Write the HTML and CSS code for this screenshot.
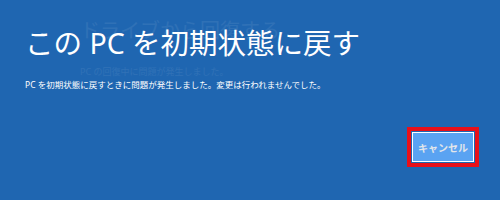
FILE: index.html
```html
<!DOCTYPE html>
<html lang="ja">
<head>
  <meta charset="UTF-8">
  <title>この PC を初期状態に戻す</title>
  <link rel="stylesheet" href="styles.css">
</head>
<body>
  <div class="screen">
    <div class="ghost">
      <div class="ghost-title">ドライブから回復する</div>
      <div class="ghost-text">PC の回復中に問題が発生しました。</div>
    </div>
    <h1 class="title">この PC を初期状態に戻す</h1>
    <p class="message">PC を初期状態に戻すときに問題が発生しました。変更は行われませんでした。</p>
    <div class="actions">
      <div class="highlight">
        <button class="btn">キャンセル</button>
      </div>
    </div>
  </div>
</body>
</html>
```

FILE: styles.css
```css
html, body {
  margin: 0;
  padding: 0;
  width: 500px;
  height: 200px;
  overflow: hidden;
  background-color: #1f66b1;
}

.screen {
  position: relative;
  height: 200px;
  padding: 0 0 0 25px;
  box-sizing: border-box;
  font-family: "Noto Sans", "Noto Sans CJK JP", sans-serif;
  color: #ffffff;
}

/* faint leftover of the previous screen fading out */
.ghost {
  position: absolute;
  top: 0;
  left: 80px;
  color: #ffffff;
  opacity: 0.07;
}

.ghost-title {
  margin-top: 18px;
  font-size: 20px;
  line-height: 26px;
}

.ghost-text {
  margin-top: 22px;
  font-size: 9px;
  line-height: 12px;
}

.title {
  margin: 0;
  padding-top: 25px;
  font-size: 28.5px;
  font-weight: normal;
  line-height: 36px;
}

.message {
  margin: 18px 0 0;
  font-size: 8.5px;
  line-height: 12px;
}

.actions {
  display: flex;
  justify-content: flex-end;
  padding-right: 21px;
  margin-top: 36px;
}

.highlight {
  border: 4px solid #e8101a;
  padding: 1px;
}

.btn {
  width: 62px;
  height: 30px;
  border: 1px solid #ffffff;
  background-color: #5aa3f2;
  color: #e2e6ea;
  font-family: "Noto Sans CJK JP", sans-serif;
  font-size: 10px;
  font-weight: bold;
  padding: 0;
}
```
